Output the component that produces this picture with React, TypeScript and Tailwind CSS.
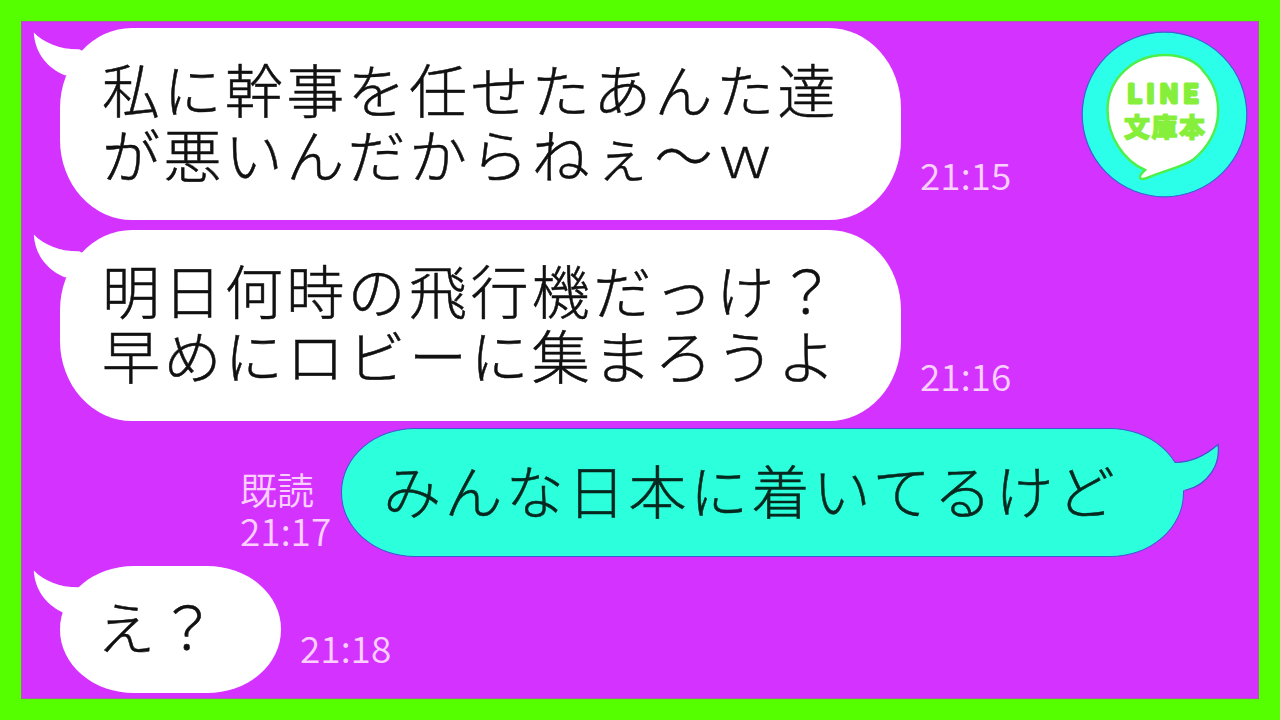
import React from "react";

interface BubbleProps {
    text: string,
    className: string
}

interface TimeProps {
    children: React.ReactNode,
    className: string
}

function LeftBubble({text, className} : BubbleProps){

    return (
        <div className={"relative shrink-0 bg-white text-[58px] font-light leading-[65px] tracking-[3.4px] text-[#111] [-webkit-text-stroke:0.5px_#111] " + className}>
            <svg className="absolute -left-[27px] top-[4px]" width="60" height="50" viewBox="0 0 60 50">
                <path d="M0.8 0.5 C11 11 27 17.5 46 17.3 L60 24 L50 44 L31.5 43.3 C15 36 2 22 0.8 0.5 Z" fill="#fff"/>
            </svg>
            <div className="relative whitespace-pre">{text}</div>
        </div>
    );

}

function RightBubble({text, className} : BubbleProps){

    return (
        <div className={"relative shrink-0 border border-[#4257cf] bg-[#2bffdb] text-[58px] font-light leading-[65px] tracking-[3.4px] text-[#06281f] [-webkit-text-stroke:0.5px_#06281f] " + className}>
            <svg className="absolute -right-[37px] top-[14px]" width="60" height="58" viewBox="0 0 60 58">
                <path
                    d="M12 20 C30 20 46 13 57.5 2 C60 19 50 42 24 47 L12 57 L4 40 Z"
                    fill="#2bffdb"/>
                <path
                    d="M15 19.5 C32 19.5 46 12 58 1.5 C61 20 49 42 25 47.5"
                    fill="none"
                    stroke="#4257cf"
                    strokeWidth="1.2"/>
            </svg>
            <div className="relative whitespace-pre">{text}</div>
        </div>
    );

}

function Time({children, className} : TimeProps){

    return (
        <div className={"whitespace-pre text-[37px] leading-[41px] text-[#fbd0ff] " + className}>
            {children}
        </div>
    );

}

function Logo(){

    return (
        <svg className="absolute left-[1059px] top-[9px]" width="168" height="168" viewBox="0 0 168 168">
            <circle cx="83.5" cy="83.5" r="82.3" fill="#2bffea" stroke="#3b62d0" strokeWidth="1.2"/>
            <path
                d="M84 24 C102 24 117 31 123 41 C133 52 138 66 137 84 C136 101 126 117 113 128 C103 136 84 139 66 147 C58 150 56 146 64 139 C43 130 26.500 106 26.500 79 C26.500 48 52 24 84 24 Z"
                fill="#fff"
                stroke="#4df04a"
                strokeWidth="2.5"/>
            <g
                fill="#86ef3c"
                stroke="#86ef3c"
                strokeLinejoin="round"
                strokeLinecap="round"
                fontFamily="'Noto Sans CJK JP', sans-serif">
                <text x="46" y="72" fontSize="26" fontWeight="700" strokeWidth="3" textLength="72">LINE</text>
                <text x="43" y="105.500" fontSize="26" fontWeight="900" strokeWidth="1.2" textLength="81">文庫本</text>
            </g>
        </svg>
    );

}

function App(){

    return (
        <div className="h-[720px] w-[1280px] overflow-hidden bg-[#55ff00] p-[21px] font-['Noto_Sans_CJK_JP',sans-serif] font-[350]">
            <div className="relative flex h-[678px] w-[1238px] flex-col border border-[#a863a8] bg-[#d433ff] pl-[38px] pt-[6px]">

                <div className="flex h-[192px] items-end">
                    <LeftBubble
                        text={"私に幹事を任せたあんた達\nが悪いんだからねぇ～ｗ"}
                        className="h-[192px] w-[841px] rounded-[72px/80px] pl-[42px] pt-[28px]"/>
                    <Time className="mb-[25px] ml-[19px]">21:15</Time>
                </div>

                <div className="mt-[10px] flex h-[191px] items-end">
                    <LeftBubble
                        text={"明日何時の飛行機だっけ？\n早めにロビーに集まろうよ"}
                        className="h-[191px] w-[841px] rounded-[72px/80px] pl-[42px] pt-[27px]"/>
                    <Time className="mb-[25px] ml-[19px]">21:16</Time>
                </div>

                <div className="mt-[7px] flex h-[129px] items-end pl-[180px]">
                    <Time className="mb-[6px] w-[101px]">{"既読\n21:17"}</Time>
                    <RightBubble
                        text="みんな日本に着いてるけど"
                        className="h-[129px] w-[843px] rounded-[74px/64px] pl-[41px] pt-[28px]"/>
                </div>

                <div className="mt-[9px] flex h-[127px] items-end">
                    <LeftBubble
                        text="え？"
                        className="h-[127px] w-[221px] rounded-[74px/63px] pl-[37px] pt-[27px]"/>
                    <Time className="mb-[25px] ml-[19px]">21:18</Time>
                </div>

                <Logo/>
            </div>
        </div>
    );

}

export default App;
